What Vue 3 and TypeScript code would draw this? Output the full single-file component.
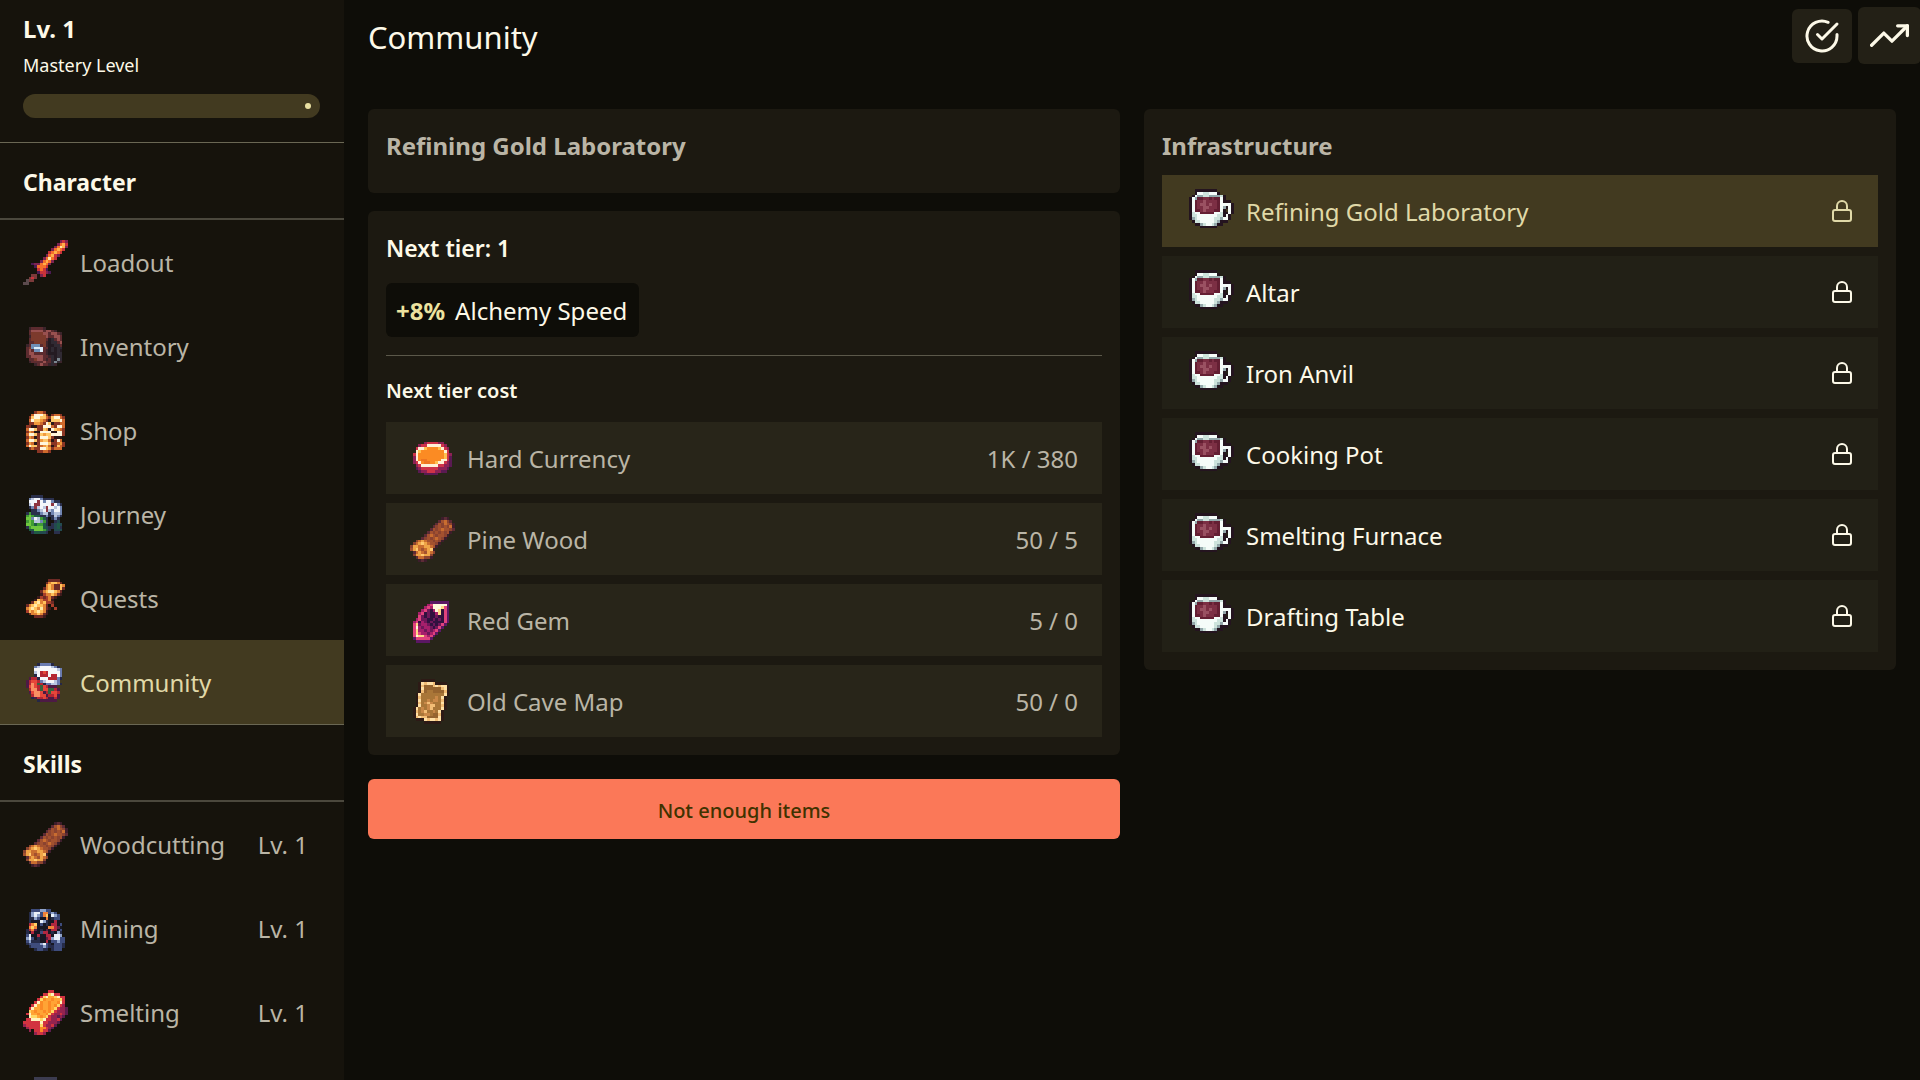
<script setup lang="ts">
import { computed, ref } from 'vue'

interface Sprite {
  palette: Record<string, string>
  rows: string[]
}

interface Cell {
  x: number
  y: number
  fill: string
}

const sprites: Record<string, Sprite> = {
  sword: {
    palette: { m: '#7d2350', p: '#4a1a52', r: '#c9333a', o: '#f5712a', y: '#ffb04a', w: '#ffe7a6', b: '#7b3a3a', g: '#5b4a4d' },
    rows: [
      '.............mrm',
      '............moyr',
      '...........mowym',
      '..........moyor.',
      '.........royor..',
      '........moyrm...',
      '.......mowor....',
      '......moyom.....',
      '...pmmoyom......',
      '....pooor.......',
      '.....rorp.......',
      '.....prrmp......',
      '...bb.mr........',
      '..brb...........',
      '.gbb............',
      'gg..............',
    ],
  },
  backpack: {
    palette: { n: '#3b242b', b: '#5c2b2f', B: '#7c3a2c', R: '#98504f', k: '#241b22', d: '#302a33', s: '#6f8fb8', W: '#dcecfa', g: '#7b8790' },
    rows: [
      '................',
      '..nbbbbn........',
      '..bRRRRbRRbn....',
      '..bBBBBRRbRRbn..',
      '..nBBBBBRbbRRb..',
      '..bBBBBBbkdbRb..',
      '..bbBBBBnkddbR..',
      '.nbsssbBnkkddb..',
      '.bBsWWWbbkdkdd..',
      '.bRbssWbnkdkdk..',
      '.bRRbbbbnkkkdd..',
      '.bbRRRRbbndkdd..',
      '..bbBRRbnbdkgd..',
      '..nbbbbRbbdgdn..',
      '....nbRbbndn....',
      '................',
    ],
  },
  coins: {
    palette: { r: '#8a3524', o: '#cf6a2d', O: '#f09a3c', y: '#ffc768', w: '#fff6dc', k: '#2b1717' },
    rows: [
      '................',
      '....roor........',
      '...owwwyr.roor..',
      '..rywwyyorywwor.',
      '..owyyOorkyyywo.',
      '..rrOOorwykrroo.',
      '.rrkkrrwwworwwo.',
      '.owwyrryOkwyOor.',
      '.rOokkwwwwkkwwr.',
      '.owwyryOyywwwwr.',
      '.rOokrwwwyrkkk..',
      '.owwyrOyyokrwo..',
      '.rOokrwwwyrroOr.',
      '.owyyroOyokryor.',
      '..rorrwwyOrooo..',
      '.....rroor......',
    ],
  },
  journey: {
    palette: { n: '#2a2f4c', s: '#7286b3', w: '#f3f5fa', l: '#b9c5de', r: '#8e3440', g: '#3f9b35', G: '#6fc63f', d: '#1f5a45', t: '#234a4f' },
    rows: [
      '................',
      '...nnnn.........',
      '..slwwsnnnn.....',
      '..wwwrwswwsnn...',
      '..lwrrwwwwrwsn..',
      '..nsrlwlrwwlws..',
      '...nnslwrlswws..',
      '.ngnnnsllnslls..',
      '.gGgddnnsnnlsn..',
      '.GGswlgdn.nsn...',
      '.gGgllsgn..nt...',
      '.GGgdggdn.ntdt..',
      '.ngGGGGdtnntdn..',
      '..ddGGGgdn.ttt..',
      '...nddttn..nn...',
      '................',
    ],
  },
  quest: {
    palette: { r: '#6e2a25', R: '#a83e2b', o: '#e08235', y: '#ffc15b', w: '#ffe9a9', k: '#3c1a1c' },
    rows: [
      '................',
      '.........rrrr...',
      '........royyor..',
      '........oyorryo.',
      '.......royorryr.',
      '......roywwyor..',
      '......kRooyork..',
      '.....kRrRork....',
      '....kyoRRok.....',
      '...rywoyRRr.....',
      '.roywyyor.R.....',
      '.oywyowork.R....',
      '.Ryoywyok.......',
      '..rooyork.......',
      '....rrrk........',
      '................',
    ],
  },
  community: {
    palette: { n: '#252747', s: '#6a7bb0', w: '#f6f7fa', l: '#b9c6e2', r: '#b52633', R: '#e6463a', o: '#f98f63', g: '#37633f', p: '#4d1a45' },
    rows: [
      '................',
      '.....nssssn.....',
      '....slwwwwlsn...',
      '....wwwwwwwwls..',
      '....lwrRrwwwws..',
      '....nwrrrwrrws..',
      '..prrnwwwrrrsn..',
      '.prRRrslwwwls...',
      '.proRgrnssllsn..',
      '.pRoRrgRrppp....',
      '..roorgRRggrp...',
      '..pRooRprgRRr...',
      '...rooRRprrRp...',
      '...nprrRrpprp...',
      '.....npppppp....',
      '................',
    ],
  },
  log: {
    palette: { k: '#3d1d2b', p: '#5d2b35', b: '#8b432f', B: '#a3512f', o: '#c96d30', y: '#efa447', w: '#ffc870' },
    rows: [
      '...........kpk..',
      '..........pBobp.',
      '.........pBboBbk',
      '........pbBbBbok',
      '.......pBbBoBBbp',
      '......pBbBbBbBk.',
      '.....pBoBbBBbk..',
      '....pbBbBoBbk...',
      '..boyoBBbBbk....',
      '.boywyoBBbk.....',
      'byyooyyoBk......',
      'BywoBoywk.......',
      '.poyoByob.......',
      '.byywyyb........',
      '..poobbk........',
      '...kpk..........',
    ],
  },
  ore: {
    palette: { n: '#252b48', s: '#3e4c7c', l: '#8fa2c9', w: '#eaf0f8', k: '#171722', r: '#b0273f', o: '#f0813a', y: '#ffd065', p: '#5b2046' },
    rows: [
      '................',
      '...sssllss......',
      '..nlwwsoosls....',
      '..nlwlsoykwls...',
      '..nnlskkoknss...',
      '..nkkkwlnkkrk...',
      '..royksknkrrks..',
      '..oyokkkkoorpk..',
      '.nropknkpkrrks..',
      '.nkrkksrrknkln..',
      '.swkkrkkrrkwwl..',
      '.lwsknkkprlwwss.',
      '.slnnnkkrksslss.',
      '.nsssslwsnksssn.',
      '..nsssslsnnsssn.',
      '....nssnn.nsss..',
    ],
  },
  ingot: {
    palette: { p: '#5b1c4c', m: '#94234f', r: '#d23340', o: '#fb8a25', O: '#ffa435', y: '#ffd764', w: '#fff3bd' },
    rows: [
      '.........rr.....',
      '.......rrywrr...',
      '......rywOOywrr.',
      '.....ryoOOoOOyr.',
      '....rwoOOoOOowr.',
      '...rwOoOOoOoyrm.',
      '..rwOOoOOoOyrmmp',
      '..yOoOOoOoyrmmmp',
      '.rwOOoOOoyrmmrmp',
      '..wyyOoOyrmmpmp.',
      '.rrwwwywrrmmrp..',
      'rrrrrrwrrmmmp...',
      'mrrrrryrmmrp....',
      '.mrrrroormp.....',
      '..m.rrorrp......',
      '....mrrm........',
    ],
  },
  anvil: {
    palette: { s: '#3c3c50', n: '#272733' },
    rows: [
      '................',
      '....ssssssss....',
      '...snnnnnnnns...',
      '..snnssssssnns..',
      '..snnnnnnnnnns..',
      '...ssssssssss...',
    ],
  },
  currency: {
    palette: { p: '#5a1a52', m: '#8d2155', r: '#cf3348', w: '#fff1d5', y: '#ffc14f', o: '#fb8b23', O: '#ee7621' },
    rows: [
      '................',
      '................',
      '.....mrrrrmm....',
      '...mrrwwwwwrm...',
      '..rwwyooooywrm..',
      '..wyoooooooowr..',
      '.rwoooooooooyrm.',
      '.mwoooooooooyrp.',
      '.mwoOOooooowwrp.',
      '.mrwoOOooywwrmp.',
      '..mrwwwwwwrrmmp.',
      '..pmrrrrrrmmmp..',
      '...pmmrrrmmpp...',
      '.....ppppp......',
      '................',
      '................',
    ],
  },
  gem: {
    palette: { p: '#5b1764', m: '#a61f6b', M: '#e0427c', k: '#31113f', w: '#fff8dc', y: '#ffd987', d: '#6e1759' },
    rows: [
      '................',
      '.......ppppppp..',
      '......mMwwwwwp..',
      '.....mMmwwwyMp..',
      '....mMdkmwykMp..',
      '...mMkdkkmykMp..',
      '...MdkdkkdkkMp..',
      '..mMddkkdkdkMp..',
      '.mMkmdkdkkkkMp..',
      '.MydmmdkdkdMp...',
      '.MwmdmmdkdMp....',
      '.MymmdmdmMp.....',
      '.MyMmmdmMp......',
      '.MwyyMmMp.......',
      '.pMMMMMp........',
      '..ppppp.........',
    ],
  },
  map: {
    palette: { k: '#2d1a16', w: '#ffdfa4', y: '#f2bd76', o: '#c98848', b: '#96642f', B: '#a97638' },
    rows: [
      '....kkkkk.......',
      '...kwywwykkkk...',
      '...kybbbywywwk..',
      '...kwbbbbbbywk..',
      '...kybBBbbbbyk..',
      '..kwBBBBBBBBwk..',
      '..kyBBBBBoBwk...',
      '..kwBBoBooByk...',
      '..kyBoyoBBBwk...',
      '..kwBBoyyBByk...',
      '.kwBoBoyBBBwk...',
      '.kyBoyBBoBwk....',
      '.kwBBooBbbyk....',
      '.kywyybbbbwk....',
      '..kkkwywwywk....',
      '.....kkkkkk.....',
    ],
  },
  mug: {
    palette: { k: '#24141f', w: '#f5fcf9', l: '#cde3dc', s: '#93a7aa', r: '#641f33', R: '#7c2f44', m: '#9a5162' },
    rows: [
      '..kkkkkkkk......',
      '..kwwllwwwk.....',
      '.kwssllsssslk...',
      'kwsrrRRrRrrwk...',
      'kwrRRmRRRRrwkkk.',
      'kwrRmmRmRRrwwwwk',
      'kwrRRmmRRRrwskwk',
      'kwrrRmRRRrrwk.wk',
      'klwwrrrrrwwlkkwk',
      'kllwwwwwwwllkwk.',
      'kslwwwwwwllswwk.',
      '.kllwwwwwlskkk..',
      '..kkslwwlskk....',
      '....kkkkkk......',
    ],
  },
}

function cells(name: string): Cell[] {
  const sprite = sprites[name]
  const out: Cell[] = []
  sprite.rows.forEach((row, y) => {
    row.split('').forEach((key, x) => {
      const fill = sprite.palette[key]
      if (fill) out.push({ x, y, fill })
    })
  })
  return out
}

const art = Object.fromEntries(Object.keys(sprites).map((name) => [name, cells(name)]))

const character = [
  { name: 'Loadout', icon: 'sword' },
  { name: 'Inventory', icon: 'backpack' },
  { name: 'Shop', icon: 'coins' },
  { name: 'Journey', icon: 'journey' },
  { name: 'Quests', icon: 'quest' },
  { name: 'Community', icon: 'community' },
]

const skills = [
  { name: 'Woodcutting', icon: 'log', level: 1 },
  { name: 'Mining', icon: 'ore', level: 1 },
  { name: 'Smelting', icon: 'ingot', level: 1 },
]

const page = ref('Community')

const costs = [
  { name: 'Hard Currency', icon: 'currency', amount: '1K / 380' },
  { name: 'Pine Wood', icon: 'log', amount: '50 / 5' },
  { name: 'Red Gem', icon: 'gem', amount: '5 / 0' },
  { name: 'Old Cave Map', icon: 'map', amount: '50 / 0' },
]

const buildings = [
  'Refining Gold Laboratory',
  'Altar',
  'Iron Anvil',
  'Cooking Pot',
  'Smelting Furnace',
  'Drafting Table',
]
const selected = ref(0)
const selectedName = computed(() => buildings[selected.value])
</script>

<template>
  <div class="app">
    <aside class="sidebar">
      <div class="mastery">
        <strong class="level">Lv. 1</strong>
        <span class="caption">Mastery Level</span>
        <div class="progress" role="progressbar" aria-label="Mastery Level" aria-valuenow="0">
          <span class="dot"></span>
        </div>
      </div>
      <nav>
        <h2 class="section">Character</h2>
        <a
          v-for="item in character"
          :key="item.name"
          href="#"
          class="link"
          :class="{ active: page === item.name }"
          @click.prevent="page = item.name"
        >
          <svg class="sprite" viewBox="0 0 16 16" aria-hidden="true">
            <rect v-for="(c, i) in art[item.icon]" :key="i" :x="c.x" :y="c.y" width="1" height="1" :fill="c.fill" />
          </svg>
          <span class="label">{{ item.name }}</span>
        </a>
        <h2 class="section">Skills</h2>
        <a
          v-for="item in skills"
          :key="item.name"
          href="#"
          class="link"
          :class="{ active: page === item.name }"
          @click.prevent="page = item.name"
        >
          <svg class="sprite" viewBox="0 0 16 16" aria-hidden="true">
            <rect v-for="(c, i) in art[item.icon]" :key="i" :x="c.x" :y="c.y" width="1" height="1" :fill="c.fill" />
          </svg>
          <span class="label">{{ item.name }}</span>
          <span class="label end">Lv. {{ item.level }}</span>
        </a>
        <a href="#" class="link" aria-label="More skills" @click.prevent>
          <svg class="sprite" viewBox="0 0 16 16" aria-hidden="true">
            <rect v-for="(c, i) in art.anvil" :key="i" :x="c.x" :y="c.y" width="1" height="1" :fill="c.fill" />
          </svg>
        </a>
      </nav>
    </aside>

    <div class="content">
      <header class="topbar">
        <h1>Community</h1>
        <div class="tools">
          <button type="button" class="tool" aria-label="Tasks">
            <svg class="stroke" width="36" height="36" viewBox="0 0 24 24" aria-hidden="true">
              <path d="M22 11.08V12a10 10 0 1 1-5.93-9.14" />
              <path d="M22 4 12 14.01l-3-3" />
            </svg>
          </button>
          <button type="button" class="tool" aria-label="Statistics">
            <svg class="stroke" width="39" height="39" viewBox="0 0 24 24" aria-hidden="true">
              <path d="m23 6-9.5 9.5-5-5L1 18" />
              <path d="M17 6h6v6" />
            </svg>
          </button>
        </div>
      </header>

      <main class="columns">
        <div class="column">
          <section class="card">
            <h2 class="title">{{ selectedName }}</h2>
          </section>
          <section class="card">
            <h3 class="tier">Next tier: 1</h3>
            <p class="bonus"><b>+8%</b><span>Alchemy Speed</span></p>
            <h4 class="cost-title">Next tier cost</h4>
            <ul class="rows">
              <li v-for="cost in costs" :key="cost.name" class="row">
                <svg class="sprite" viewBox="0 0 16 16" aria-hidden="true">
                  <rect v-for="(c, i) in art[cost.icon]" :key="i" :x="c.x" :y="c.y" width="1" height="1" :fill="c.fill" />
                </svg>
                <span class="label">{{ cost.name }}</span>
                <span class="label end">{{ cost.amount }}</span>
              </li>
            </ul>
          </section>
          <button type="button" class="upgrade">Not enough items</button>
        </div>

        <div class="column">
          <section class="card">
            <h2 class="title">Infrastructure</h2>
            <div class="rows">
              <button
                v-for="(name, index) in buildings"
                :key="name"
                type="button"
                class="row building"
                :class="{ active: selected === index }"
                @click="selected = index"
              >
                <svg class="sprite" viewBox="0 0 16 16" aria-hidden="true">
                  <rect v-for="(c, i) in art.mug" :key="i" :x="c.x" :y="c.y" width="1" height="1" :fill="c.fill" />
                </svg>
                <span class="label">{{ name }}</span>
                <svg class="stroke end" width="24" height="24" viewBox="0 0 24 24" aria-hidden="true">
                  <rect x="3" y="11" width="18" height="11" rx="2" />
                  <path d="M7 11V7a5 5 0 0 1 10 0v4" />
                </svg>
              </button>
            </div>
          </section>
        </div>
      </main>
    </div>
  </div>
</template>

<style>
body {
  margin: 0;
  background: #0e0d08;
}
</style>

<style scoped>
.app {
  display: flex;
  height: 100vh;
  overflow: hidden;
  background: #0e0d08;
  color: #fdf9e8;
  font-family: "Noto Sans", "Open Sans", sans-serif;
  font-size: 24px;
  line-height: 36px;
}
h1,
h2,
h3,
h4,
p,
ul {
  margin: 0;
  padding: 0;
}
button {
  border: 0;
  font: inherit;
  color: inherit;
  cursor: pointer;
}
.sidebar {
  box-sizing: border-box;
  flex: 0 0 344px;
  overflow: hidden;
  background: #16130c;
}
.mastery {
  display: flex;
  flex-direction: column;
  padding: 11px 24px 24px 23px;
}
.level {
  font-size: 24px;
  line-height: 36px;
}
.caption {
  font-size: 18px;
  line-height: 36px;
}
.progress {
  display: flex;
  align-items: center;
  justify-content: flex-end;
  height: 24px;
  margin-top: 11px;
  padding-right: 9px;
  box-sizing: border-box;
  border-radius: 12px;
  background: #423a20;
}
.dot {
  width: 6px;
  height: 6px;
  border-radius: 3px;
  background: #e9e0a2;
}
.section {
  padding: 21px 23px 18px;
  border-top: 1px solid #6a6754;
  border-bottom: 2px solid #4b483d;
  font-size: 23px;
  font-weight: 700;
  line-height: 36px;
}
.link {
  display: flex;
  align-items: center;
  gap: 12px;
  height: 84px;
  padding: 0 36px 0 23px;
  color: #bab5a6;
  text-decoration: none;
}
.active {
  background: #423a20;
  color: #e0d9a8;
}
.sprite {
  flex: none;
  width: 45px;
  height: 45px;
  shape-rendering: crispEdges;
}
.label {
  padding-top: 2px;
}
.stroke {
  fill: none;
  stroke: currentColor;
  stroke-width: 2;
  stroke-linecap: round;
  stroke-linejoin: round;
}
.end {
  margin-left: auto;
}
.content {
  flex: 1;
  min-width: 0;
}
.topbar {
  display: flex;
  align-items: center;
  justify-content: space-between;
  height: 71px;
  padding-left: 24px;
}
h1 {
  padding-top: 2px;
  font-size: 31px;
  font-weight: 400;
  line-height: 48px;
}
.tools {
  display: flex;
  align-items: center;
  gap: 6px;
  margin-right: -1px;
}
.tool {
  display: flex;
  padding: 9px 12px;
  border-radius: 6px;
  background: #232016;
}
.columns {
  display: grid;
  grid-template-columns: 1fr 1fr;
  align-items: start;
  gap: 24px;
  padding: 38px 24px 24px;
}
.column {
  display: flex;
  flex-direction: column;
  gap: 18px;
}
.card {
  padding: 18px;
  border-radius: 6px;
  background: #1c1911;
}
.title {
  margin-bottom: 10px;
  color: #bab5a6;
  font-size: 24px;
  font-weight: 700;
  line-height: 38px;
}
.tier {
  margin-bottom: 16px;
  font-size: 23px;
  font-weight: 600;
  line-height: 38px;
}
.bonus {
  display: flex;
  gap: 10px;
  width: fit-content;
  padding: 10px 12px 8px 10px;
  border-radius: 6px;
  background: #0e0d08;
}
.bonus b {
  color: #ece39f;
  font-weight: 700;
}
.cost-title {
  margin-top: 18px;
  padding: 17px 0 13px;
  border-top: 1px solid #5b584a;
  font-size: 20px;
  font-weight: 600;
  line-height: 36px;
}
.rows {
  display: flex;
  flex-direction: column;
  gap: 9px;
  list-style: none;
}
.row {
  display: flex;
  align-items: center;
  gap: 12px;
  height: 72px;
  padding: 0 24px;
  background: #282519;
  color: #bab5a6;
}
.building {
  padding-left: 27px;
  background: #222016;
  color: #fdf9e8;
}
.building.active {
  background: #423a20;
  color: #e0d9a8;
}
.upgrade {
  height: 60px;
  margin-top: 6px;
  padding-top: 4px;
  border-radius: 6px;
  background: #fb7858;
  color: #403200;
  font-size: 20px;
  font-weight: 500;
}
</style>
